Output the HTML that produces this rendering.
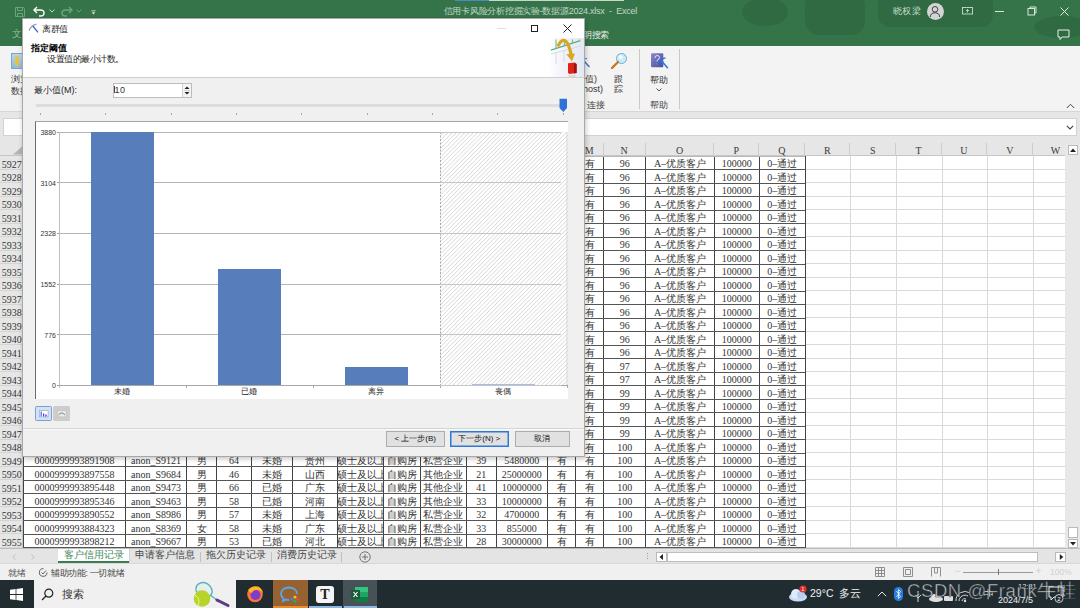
<!DOCTYPE html>
<html><head><meta charset="utf-8">
<style>
*{margin:0;padding:0;box-sizing:border-box}
html,body{width:1080px;height:608px;overflow:hidden;background:#f3f3f3;font-family:"Liberation Sans",sans-serif}
.a{position:absolute}
#title{position:absolute;left:0;top:0;width:1080px;height:45.6px;background:#357449;overflow:hidden}
#ribbon{position:absolute;left:0;top:45.6px;width:1080px;height:65.4px;background:#f3f3f3}
#fbar{position:absolute;left:0;top:111px;width:1080px;height:32.3px;background:#e6e6e6;border-top:1px solid #d6d6d6}
#gridbg{position:absolute;left:23.3px;top:156.3px;width:1042px;height:391.5px;background:#fff}
.colhdr{position:absolute;left:0;width:1066px;background:#e6e6e6;border-bottom:1px solid #c6c6c6}
.ch{position:absolute;font-family:"Liberation Serif",serif;font-size:10px;color:#3a3a3a;text-align:center;line-height:15px;border-right:1px solid #cdcdcd}
.rh{position:absolute;left:0;width:23.3px;background:#e6e6e6;font-family:"Liberation Serif",serif;font-size:10px;color:#333;text-align:right;padding-right:0.5px;padding-top:1.6px;line-height:13px;border-bottom:1px solid #d4d4d4;border-right:1px solid #c6c6c6}
.vl{position:absolute;width:1px;background:#dadada}
.hl{position:absolute;height:1px;background:#dadada}
.vd{position:absolute;width:1px;background:#444}
.hd{position:absolute;height:1px;background:#555}
.c{position:absolute;font-family:"Liberation Serif",serif;font-size:10px;color:#333;text-align:center;line-height:13.5px;white-space:nowrap;overflow:hidden}
#tabs{position:absolute;left:0;top:548px;width:1080px;height:16px;background:#e4e4e4;border-top:1px solid #bdbdbd;border-bottom:1px solid #d8d8d8}
#status{position:absolute;left:0;top:564px;width:1080px;height:16px;background:#f0f0f0}
#taskbar{position:absolute;left:0;top:580px;width:1080px;height:28px;background:#212c31}
#dlg{position:absolute;left:22px;top:18px;width:563px;height:439px;background:#f0f0f0;border:1px solid #a8a8a8;box-shadow:1px 2px 5px rgba(0,0,0,.22)}
.t{position:absolute;white-space:nowrap}
.hatch{background:repeating-linear-gradient(-45deg,#fff 0,#fff 2.2px,#cfcfcf 2.2px,#cfcfcf 3px);border:1px dashed #c8c8c8}
.btn{background:#e1e1e1;border:1px solid #adadad;font-size:8px;line-height:13.5px;text-align:center;color:#111;white-space:nowrap}
</style></head><body>
<div id="title">
<svg class="a" style="left:0;top:0" width="1080" height="45" viewBox="0 0 1080 45">
<g fill="#2f6a43">
<ellipse cx="765" cy="12" rx="23" ry="14"/><rect x="805" y="-8" width="60" height="43" rx="14"/><rect x="878" y="-10" width="115" height="37" rx="12"/>
<ellipse cx="1062" cy="27" rx="28" ry="11"/>
</g>
</svg>
<div class="a" style="left:455px;top:0;width:169px;height:1.4px;background:#c9d6cd"></div>
<div class="a" style="left:455px;top:0;width:34px;height:1.4px;background:#4a88c8"></div>
<!-- save -->
<svg class="a" style="left:15px;top:6.5px" width="10" height="10" viewBox="0 0 10 10"><path d="M.5 .5 H8.3 L9.5 1.7 V9.5 H.5 Z M2.5 .5 V3.5 H7.5 V.5 M2.5 9.5 V6.5 H7.5 V9.5" stroke="#6fa07e" stroke-width="1" fill="none"/></svg>
<!-- undo -->
<svg class="a" style="left:33px;top:6px" width="13" height="11" viewBox="0 0 13 11"><path d="M4 1 L1 4 L4 7" stroke="#fff" stroke-width="1.4" fill="none"/><path d="M1.5 4 H7.5 Q11 4 11 7 Q11 10 7.5 10 H6" stroke="#fff" stroke-width="1.4" fill="none"/></svg>
<svg class="a" style="left:49px;top:9px" width="6" height="4" viewBox="0 0 6 4"><path d="M.5 .5 L3 3 L5.5 .5" stroke="#cfe0d4" stroke-width=".9" fill="none"/></svg>
<svg class="a" style="left:60px;top:6px" width="13" height="11" viewBox="0 0 13 11"><path d="M9 1 L12 4 L9 7" stroke="#6fa680" stroke-width="1.4" fill="none"/><path d="M11.5 4 H5.5 Q2 4 2 7 Q2 10 5.5 10 H7" stroke="#6fa680" stroke-width="1.4" fill="none"/></svg>
<svg class="a" style="left:76px;top:9px" width="6" height="4" viewBox="0 0 6 4"><path d="M.5 .5 L3 3 L5.5 .5" stroke="#6fa680" stroke-width=".9" fill="none"/></svg>
<svg class="a" style="left:91px;top:9.5px" width="5" height="5" viewBox="0 0 5 5"><path d="M.5 .8 H4.5" stroke="#dfe9e2" stroke-width=".8"/><path d="M.8 2.2 H4.2 L2.5 4.5 Z" fill="#dfe9e2"/></svg>
<div class="t" style="left:443.5px;top:5px;font-size:9px;line-height:13px;color:#c2d6c8;letter-spacing:-0.25px">信用卡风险分析挖掘实验-数据源2024.xlsx&nbsp; - &nbsp;Excel</div>
<div class="t" style="left:12px;top:28px;font-size:9.5px;line-height:12px;color:#8fbc9c">文</div>
<div class="t" style="left:583px;top:29px;font-size:9px;line-height:12px;color:#e6efe8;letter-spacing:-0.5px">明搜索</div>
<div class="t" style="left:893px;top:5px;font-size:9px;line-height:13px;color:#c5dccb;letter-spacing:-0.4px">晓权 梁</div>
<div class="a" style="left:926.5px;top:3px;width:17px;height:17px;border-radius:50%;background:#d4d4d4"></div>
<svg class="a" style="left:929px;top:5px" width="12" height="13" viewBox="0 0 12 13"><circle cx="6" cy="4.3" r="2.8" stroke="#444" stroke-width="1" fill="none"/><path d="M1.3 12 Q1.5 7.8 6 7.8 Q10.5 7.8 10.7 12" stroke="#444" stroke-width="1" fill="none"/></svg>
<svg class="a" style="left:962px;top:7px" width="11" height="8" viewBox="0 0 11 8"><rect x=".5" y=".5" width="10" height="6.5" stroke="#c8dccd" stroke-width=".9" fill="none"/><path d="M5.5 5.5 V2.5 M4 4 L5.5 2.5 L7 4" stroke="#c8dccd" stroke-width=".9" fill="none"/></svg>
<div class="a" style="left:995px;top:10.5px;width:9px;height:1px;background:#d8e6dc"></div>
<svg class="a" style="left:1027px;top:6px" width="10" height="10" viewBox="0 0 10 10"><rect x="1" y="2.5" width="6.5" height="6.5" stroke="#d8e6dc" stroke-width="1" fill="none"/><path d="M3 2.5 V1 H9 V7 H7.5" stroke="#d8e6dc" stroke-width="1" fill="none"/></svg>
<svg class="a" style="left:1059.5px;top:7px" width="9" height="9" viewBox="0 0 9 9"><path d="M.5 .5 L8.5 8.5 M8.5 .5 L.5 8.5" stroke="#dfe9e2" stroke-width="1"/></svg>
<svg class="a" style="left:1057px;top:29px" width="13" height="12" viewBox="0 0 13 12"><path d="M1 1 H12 V8 H5 L3 10.5 V8 H1 Z" stroke="#e8f0ea" stroke-width="1" fill="none"/></svg>
</div>
<div id="ribbon">
<div class="a" style="left:11px;top:7px;width:13px;height:16px;background:linear-gradient(#bcd6ea,#8fb8dc);border:1px solid #7aa6cc"></div>
<div class="a" style="left:15px;top:10px;width:4px;height:10px;background:#e2c53a;border-radius:2px"></div>
<div class="t" style="left:11px;top:27px;font-size:9px;line-height:12px;color:#333">浏览<br>数据</div>
<svg class="a" style="left:583px;top:12px" width="8" height="10" viewBox="0 0 8 10"><path d="M1 3 L6.5 9" stroke="#3a78d8" stroke-width="1.5" fill="none"/><path d="M1 1 L4 .5" stroke="#3a78d8" stroke-width="1" fill="none"/></svg>
<div class="t" style="left:560px;width:37px;text-align:right;top:28.8px;font-size:9px;line-height:10px;color:#333">(值)</div><div class="t" style="left:560px;width:43px;text-align:right;top:38.8px;font-size:9px;line-height:10px;color:#333">host)</div>
<svg class="a" style="left:610px;top:6px" width="18" height="18" viewBox="0 0 18 18"><circle cx="11.5" cy="6.5" r="5" fill="#c9ecf8" stroke="#6aaed0" stroke-width="1"/><circle cx="10.5" cy="5" r="2" fill="#fff" opacity=".8"/><path d="M8 10 L2 16" stroke="#c8741e" stroke-width="2.4" stroke-linecap="round"/></svg>
<div class="t" style="left:614px;top:28.8px;font-size:9px;line-height:10px;color:#333">跟<br>踪</div>
<div class="t" style="left:587px;top:53px;font-size:9px;line-height:12px;color:#444">连接</div>
<div class="a" style="left:639px;top:3px;width:1px;height:60px;background:#c9c9c9"></div>
<svg class="a" style="left:651px;top:7.5px" width="19" height="17" viewBox="0 0 19 17"><defs><linearGradient id="hb" x1="0" y1="0" x2="1" y2="1"><stop offset="0" stop-color="#8a8ad0"/><stop offset="1" stop-color="#4a4a96"/></linearGradient></defs><rect x="0" y="0.3" width="12.3" height="14" rx="1" fill="url(#hb)"/><path d="M4 5 Q4 2.5 6.3 2.5 Q8.5 2.5 8.5 4.6 Q8.5 6.3 6.3 7 V8.5" stroke="#e8e8f8" stroke-width="1" fill="none"/><circle cx="6.3" cy="10.5" r=".7" fill="#e8e8f8"/><path d="M6 11.2 Q9 6 14.5 4.9" stroke="#2c6fd0" stroke-width="1.4" fill="none"/><path d="M9.7 6.7 L16.8 15.2" stroke="#2f7ae0" stroke-width="1.6"/></svg>
<div class="t" style="left:650px;top:28px;font-size:9px;line-height:12px;color:#333">帮助</div>
<svg class="a" style="left:656px;top:42px" width="6" height="4" viewBox="0 0 6 4"><path d="M.5 .5 L3 3 L5.5 .5" stroke="#444" stroke-width=".9" fill="none"/></svg>
<div class="t" style="left:650px;top:53px;font-size:9px;line-height:12px;color:#444">帮助</div>
<div class="a" style="left:679px;top:3px;width:1px;height:60px;background:#c9c9c9"></div>
<svg class="a" style="left:1066px;top:57px" width="9" height="6" viewBox="0 0 9 6"><path d="M.8 5 L4.5 1.3 L8.2 5" stroke="#444" stroke-width="1" fill="none"/></svg>
</div>
<div id="fbar">
<div class="a" style="left:3px;top:5.8px;width:1073.5px;height:18px;background:#fff;border:1px solid #d2d2d2"></div>
<svg class="a" style="left:1066px;top:13px" width="8" height="5" viewBox="0 0 8 5"><path d="M.8 .8 L4 4 L7.2 .8" stroke="#444" stroke-width="1.1" fill="none"/></svg>
</div>

<div id="gridbg"></div>
<div class="colhdr" style="top:143.3px;height:13px"></div>
<div class="ch" style="left:23.3px;width:102.3px;top:143.3px;height:13px">A</div>
<div class="ch" style="left:125.6px;width:60.9px;top:143.3px;height:13px">B</div>
<div class="ch" style="left:186.5px;width:30.1px;top:143.3px;height:13px">C</div>
<div class="ch" style="left:216.6px;width:34.9px;top:143.3px;height:13px">D</div>
<div class="ch" style="left:251.5px;width:41.1px;top:143.3px;height:13px">E</div>
<div class="ch" style="left:292.6px;width:44.5px;top:143.3px;height:13px">F</div>
<div class="ch" style="left:337.1px;width:46.2px;top:143.3px;height:13px">G</div>
<div class="ch" style="left:383.3px;width:37.3px;top:143.3px;height:13px">H</div>
<div class="ch" style="left:420.6px;width:45.8px;top:143.3px;height:13px">I</div>
<div class="ch" style="left:466.4px;width:29.8px;top:143.3px;height:13px">J</div>
<div class="ch" style="left:496.2px;width:51.3px;top:143.3px;height:13px">K</div>
<div class="ch" style="left:547.5px;width:28.1px;top:143.3px;height:13px">L</div>
<div class="ch" style="left:575.6px;width:28.1px;top:143.3px;height:13px">M</div>
<div class="ch" style="left:603.7px;width:42.1px;top:143.3px;height:13px">N</div>
<div class="ch" style="left:645.8px;width:68.4px;top:143.3px;height:13px">O</div>
<div class="ch" style="left:714.2px;width:45.1px;top:143.3px;height:13px">P</div>
<div class="ch" style="left:759.3px;width:46px;top:143.3px;height:13px">Q</div>
<div class="ch" style="left:805.3px;width:45px;top:143.3px;height:13px">R</div>
<div class="ch" style="left:850.3px;width:46px;top:143.3px;height:13px">S</div>
<div class="ch" style="left:896.3px;width:45.4px;top:143.3px;height:13px">T</div>
<div class="ch" style="left:941.7px;width:45.6px;top:143.3px;height:13px">U</div>
<div class="ch" style="left:987.3px;width:46px;top:143.3px;height:13px">V</div>
<div class="ch" style="left:1033.3px;width:45.5px;top:143.3px;height:13px">W</div>
<div class="rh" style="top:156.3px;height:13.5px">5927</div>
<div class="rh" style="top:169.8px;height:13.5px">5928</div>
<div class="rh" style="top:183.3px;height:13.5px">5929</div>
<div class="rh" style="top:196.8px;height:13.5px">5930</div>
<div class="rh" style="top:210.3px;height:13.5px">5931</div>
<div class="rh" style="top:223.8px;height:13.5px">5932</div>
<div class="rh" style="top:237.3px;height:13.5px">5933</div>
<div class="rh" style="top:250.8px;height:13.5px">5934</div>
<div class="rh" style="top:264.3px;height:13.5px">5935</div>
<div class="rh" style="top:277.8px;height:13.5px">5936</div>
<div class="rh" style="top:291.3px;height:13.5px">5937</div>
<div class="rh" style="top:304.8px;height:13.5px">5938</div>
<div class="rh" style="top:318.3px;height:13.5px">5939</div>
<div class="rh" style="top:331.8px;height:13.5px">5940</div>
<div class="rh" style="top:345.3px;height:13.5px">5941</div>
<div class="rh" style="top:358.8px;height:13.5px">5942</div>
<div class="rh" style="top:372.3px;height:13.5px">5943</div>
<div class="rh" style="top:385.8px;height:13.5px">5944</div>
<div class="rh" style="top:399.3px;height:13.5px">5945</div>
<div class="rh" style="top:412.8px;height:13.5px">5946</div>
<div class="rh" style="top:426.3px;height:13.5px">5947</div>
<div class="rh" style="top:439.8px;height:13.5px">5948</div>
<div class="rh" style="top:453.3px;height:13.5px">5949</div>
<div class="rh" style="top:466.8px;height:13.5px">5950</div>
<div class="rh" style="top:480.3px;height:13.5px">5951</div>
<div class="rh" style="top:493.8px;height:13.5px">5952</div>
<div class="rh" style="top:507.3px;height:13.5px">5953</div>
<div class="rh" style="top:520.8px;height:13.5px">5954</div>
<div class="rh" style="top:534.3px;height:13.5px">5955</div>
<div class="vl" style="left:805.3px;top:156.3px;height:391.5px"></div>
<div class="vl" style="left:850.3px;top:156.3px;height:391.5px"></div>
<div class="vl" style="left:896.3px;top:156.3px;height:391.5px"></div>
<div class="vl" style="left:941.7px;top:156.3px;height:391.5px"></div>
<div class="vl" style="left:987.3px;top:156.3px;height:391.5px"></div>
<div class="vl" style="left:1033.3px;top:156.3px;height:391.5px"></div>
<div class="hl" style="left:805.3px;width:260px;top:168.8px"></div>
<div class="hl" style="left:805.3px;width:260px;top:182.3px"></div>
<div class="hl" style="left:805.3px;width:260px;top:195.8px"></div>
<div class="hl" style="left:805.3px;width:260px;top:209.3px"></div>
<div class="hl" style="left:805.3px;width:260px;top:222.8px"></div>
<div class="hl" style="left:805.3px;width:260px;top:236.3px"></div>
<div class="hl" style="left:805.3px;width:260px;top:249.8px"></div>
<div class="hl" style="left:805.3px;width:260px;top:263.3px"></div>
<div class="hl" style="left:805.3px;width:260px;top:276.8px"></div>
<div class="hl" style="left:805.3px;width:260px;top:290.3px"></div>
<div class="hl" style="left:805.3px;width:260px;top:303.8px"></div>
<div class="hl" style="left:805.3px;width:260px;top:317.3px"></div>
<div class="hl" style="left:805.3px;width:260px;top:330.8px"></div>
<div class="hl" style="left:805.3px;width:260px;top:344.3px"></div>
<div class="hl" style="left:805.3px;width:260px;top:357.8px"></div>
<div class="hl" style="left:805.3px;width:260px;top:371.3px"></div>
<div class="hl" style="left:805.3px;width:260px;top:384.8px"></div>
<div class="hl" style="left:805.3px;width:260px;top:398.3px"></div>
<div class="hl" style="left:805.3px;width:260px;top:411.8px"></div>
<div class="hl" style="left:805.3px;width:260px;top:425.3px"></div>
<div class="hl" style="left:805.3px;width:260px;top:438.8px"></div>
<div class="hl" style="left:805.3px;width:260px;top:452.3px"></div>
<div class="hl" style="left:805.3px;width:260px;top:465.8px"></div>
<div class="hl" style="left:805.3px;width:260px;top:479.3px"></div>
<div class="hl" style="left:805.3px;width:260px;top:492.8px"></div>
<div class="hl" style="left:805.3px;width:260px;top:506.3px"></div>
<div class="hl" style="left:805.3px;width:260px;top:519.8px"></div>
<div class="hl" style="left:805.3px;width:260px;top:533.3px"></div>
<div class="hl" style="left:805.3px;width:260px;top:546.8px"></div>
<div class="vd" style="left:22.8px;top:156.3px;height:391.5px"></div>
<div class="vd" style="left:125.1px;top:156.3px;height:391.5px"></div>
<div class="vd" style="left:186px;top:156.3px;height:391.5px"></div>
<div class="vd" style="left:216.1px;top:156.3px;height:391.5px"></div>
<div class="vd" style="left:251px;top:156.3px;height:391.5px"></div>
<div class="vd" style="left:292.1px;top:156.3px;height:391.5px"></div>
<div class="vd" style="left:336.6px;top:156.3px;height:391.5px"></div>
<div class="vd" style="left:382.8px;top:156.3px;height:391.5px"></div>
<div class="vd" style="left:420.1px;top:156.3px;height:391.5px"></div>
<div class="vd" style="left:465.9px;top:156.3px;height:391.5px"></div>
<div class="vd" style="left:495.7px;top:156.3px;height:391.5px"></div>
<div class="vd" style="left:547px;top:156.3px;height:391.5px"></div>
<div class="vd" style="left:575.1px;top:156.3px;height:391.5px"></div>
<div class="vd" style="left:603.2px;top:156.3px;height:391.5px"></div>
<div class="vd" style="left:645.3px;top:156.3px;height:391.5px"></div>
<div class="vd" style="left:713.7px;top:156.3px;height:391.5px"></div>
<div class="vd" style="left:758.8px;top:156.3px;height:391.5px"></div>
<div class="vd" style="left:804.8px;top:156.3px;height:391.5px"></div>
<div class="hd" style="left:23.3px;width:782px;top:155.8px;background:#b8b8b8"></div>
<div class="hd" style="left:23.3px;width:782px;top:169.3px"></div>
<div class="hd" style="left:23.3px;width:782px;top:182.8px"></div>
<div class="hd" style="left:23.3px;width:782px;top:196.3px"></div>
<div class="hd" style="left:23.3px;width:782px;top:209.8px"></div>
<div class="hd" style="left:23.3px;width:782px;top:223.3px"></div>
<div class="hd" style="left:23.3px;width:782px;top:236.8px"></div>
<div class="hd" style="left:23.3px;width:782px;top:250.3px"></div>
<div class="hd" style="left:23.3px;width:782px;top:263.8px"></div>
<div class="hd" style="left:23.3px;width:782px;top:277.3px"></div>
<div class="hd" style="left:23.3px;width:782px;top:290.8px"></div>
<div class="hd" style="left:23.3px;width:782px;top:304.3px"></div>
<div class="hd" style="left:23.3px;width:782px;top:317.8px"></div>
<div class="hd" style="left:23.3px;width:782px;top:331.3px"></div>
<div class="hd" style="left:23.3px;width:782px;top:344.8px"></div>
<div class="hd" style="left:23.3px;width:782px;top:358.3px"></div>
<div class="hd" style="left:23.3px;width:782px;top:371.8px"></div>
<div class="hd" style="left:23.3px;width:782px;top:385.3px"></div>
<div class="hd" style="left:23.3px;width:782px;top:398.8px"></div>
<div class="hd" style="left:23.3px;width:782px;top:412.3px"></div>
<div class="hd" style="left:23.3px;width:782px;top:425.8px"></div>
<div class="hd" style="left:23.3px;width:782px;top:439.3px"></div>
<div class="hd" style="left:23.3px;width:782px;top:452.8px"></div>
<div class="hd" style="left:23.3px;width:782px;top:466.3px"></div>
<div class="hd" style="left:23.3px;width:782px;top:479.8px"></div>
<div class="hd" style="left:23.3px;width:782px;top:493.3px"></div>
<div class="hd" style="left:23.3px;width:782px;top:506.8px"></div>
<div class="hd" style="left:23.3px;width:782px;top:520.3px"></div>
<div class="hd" style="left:23.3px;width:782px;top:533.8px"></div>
<div class="hd" style="left:23.3px;width:782px;top:547.3px"></div>
<div class="c" style="left:547.5px;width:28.1px;top:157.1px;height:12.7px">有</div>
<div class="c" style="left:575.6px;width:28.1px;top:157.1px;height:12.7px">有</div>
<div class="c" style="left:603.7px;width:42.1px;top:157.1px;height:12.7px">96</div>
<div class="c" style="left:645.8px;width:68.4px;top:157.1px;height:12.7px">A–优质客户</div>
<div class="c" style="left:714.2px;width:45.1px;top:157.1px;height:12.7px">100000</div>
<div class="c" style="left:759.3px;width:46px;top:157.1px;height:12.7px">0–通过</div>
<div class="c" style="left:547.5px;width:28.1px;top:170.6px;height:12.7px">有</div>
<div class="c" style="left:575.6px;width:28.1px;top:170.6px;height:12.7px">有</div>
<div class="c" style="left:603.7px;width:42.1px;top:170.6px;height:12.7px">96</div>
<div class="c" style="left:645.8px;width:68.4px;top:170.6px;height:12.7px">A–优质客户</div>
<div class="c" style="left:714.2px;width:45.1px;top:170.6px;height:12.7px">100000</div>
<div class="c" style="left:759.3px;width:46px;top:170.6px;height:12.7px">0–通过</div>
<div class="c" style="left:547.5px;width:28.1px;top:184.1px;height:12.7px">有</div>
<div class="c" style="left:575.6px;width:28.1px;top:184.1px;height:12.7px">有</div>
<div class="c" style="left:603.7px;width:42.1px;top:184.1px;height:12.7px">96</div>
<div class="c" style="left:645.8px;width:68.4px;top:184.1px;height:12.7px">A–优质客户</div>
<div class="c" style="left:714.2px;width:45.1px;top:184.1px;height:12.7px">100000</div>
<div class="c" style="left:759.3px;width:46px;top:184.1px;height:12.7px">0–通过</div>
<div class="c" style="left:547.5px;width:28.1px;top:197.6px;height:12.7px">有</div>
<div class="c" style="left:575.6px;width:28.1px;top:197.6px;height:12.7px">有</div>
<div class="c" style="left:603.7px;width:42.1px;top:197.6px;height:12.7px">96</div>
<div class="c" style="left:645.8px;width:68.4px;top:197.6px;height:12.7px">A–优质客户</div>
<div class="c" style="left:714.2px;width:45.1px;top:197.6px;height:12.7px">100000</div>
<div class="c" style="left:759.3px;width:46px;top:197.6px;height:12.7px">0–通过</div>
<div class="c" style="left:547.5px;width:28.1px;top:211.1px;height:12.7px">有</div>
<div class="c" style="left:575.6px;width:28.1px;top:211.1px;height:12.7px">有</div>
<div class="c" style="left:603.7px;width:42.1px;top:211.1px;height:12.7px">96</div>
<div class="c" style="left:645.8px;width:68.4px;top:211.1px;height:12.7px">A–优质客户</div>
<div class="c" style="left:714.2px;width:45.1px;top:211.1px;height:12.7px">100000</div>
<div class="c" style="left:759.3px;width:46px;top:211.1px;height:12.7px">0–通过</div>
<div class="c" style="left:547.5px;width:28.1px;top:224.6px;height:12.7px">有</div>
<div class="c" style="left:575.6px;width:28.1px;top:224.6px;height:12.7px">有</div>
<div class="c" style="left:603.7px;width:42.1px;top:224.6px;height:12.7px">96</div>
<div class="c" style="left:645.8px;width:68.4px;top:224.6px;height:12.7px">A–优质客户</div>
<div class="c" style="left:714.2px;width:45.1px;top:224.6px;height:12.7px">100000</div>
<div class="c" style="left:759.3px;width:46px;top:224.6px;height:12.7px">0–通过</div>
<div class="c" style="left:547.5px;width:28.1px;top:238.1px;height:12.7px">有</div>
<div class="c" style="left:575.6px;width:28.1px;top:238.1px;height:12.7px">有</div>
<div class="c" style="left:603.7px;width:42.1px;top:238.1px;height:12.7px">96</div>
<div class="c" style="left:645.8px;width:68.4px;top:238.1px;height:12.7px">A–优质客户</div>
<div class="c" style="left:714.2px;width:45.1px;top:238.1px;height:12.7px">100000</div>
<div class="c" style="left:759.3px;width:46px;top:238.1px;height:12.7px">0–通过</div>
<div class="c" style="left:547.5px;width:28.1px;top:251.6px;height:12.7px">有</div>
<div class="c" style="left:575.6px;width:28.1px;top:251.6px;height:12.7px">有</div>
<div class="c" style="left:603.7px;width:42.1px;top:251.6px;height:12.7px">96</div>
<div class="c" style="left:645.8px;width:68.4px;top:251.6px;height:12.7px">A–优质客户</div>
<div class="c" style="left:714.2px;width:45.1px;top:251.6px;height:12.7px">100000</div>
<div class="c" style="left:759.3px;width:46px;top:251.6px;height:12.7px">0–通过</div>
<div class="c" style="left:547.5px;width:28.1px;top:265.1px;height:12.7px">有</div>
<div class="c" style="left:575.6px;width:28.1px;top:265.1px;height:12.7px">有</div>
<div class="c" style="left:603.7px;width:42.1px;top:265.1px;height:12.7px">96</div>
<div class="c" style="left:645.8px;width:68.4px;top:265.1px;height:12.7px">A–优质客户</div>
<div class="c" style="left:714.2px;width:45.1px;top:265.1px;height:12.7px">100000</div>
<div class="c" style="left:759.3px;width:46px;top:265.1px;height:12.7px">0–通过</div>
<div class="c" style="left:547.5px;width:28.1px;top:278.6px;height:12.7px">有</div>
<div class="c" style="left:575.6px;width:28.1px;top:278.6px;height:12.7px">有</div>
<div class="c" style="left:603.7px;width:42.1px;top:278.6px;height:12.7px">96</div>
<div class="c" style="left:645.8px;width:68.4px;top:278.6px;height:12.7px">A–优质客户</div>
<div class="c" style="left:714.2px;width:45.1px;top:278.6px;height:12.7px">100000</div>
<div class="c" style="left:759.3px;width:46px;top:278.6px;height:12.7px">0–通过</div>
<div class="c" style="left:547.5px;width:28.1px;top:292.1px;height:12.7px">有</div>
<div class="c" style="left:575.6px;width:28.1px;top:292.1px;height:12.7px">有</div>
<div class="c" style="left:603.7px;width:42.1px;top:292.1px;height:12.7px">96</div>
<div class="c" style="left:645.8px;width:68.4px;top:292.1px;height:12.7px">A–优质客户</div>
<div class="c" style="left:714.2px;width:45.1px;top:292.1px;height:12.7px">100000</div>
<div class="c" style="left:759.3px;width:46px;top:292.1px;height:12.7px">0–通过</div>
<div class="c" style="left:547.5px;width:28.1px;top:305.6px;height:12.7px">有</div>
<div class="c" style="left:575.6px;width:28.1px;top:305.6px;height:12.7px">有</div>
<div class="c" style="left:603.7px;width:42.1px;top:305.6px;height:12.7px">96</div>
<div class="c" style="left:645.8px;width:68.4px;top:305.6px;height:12.7px">A–优质客户</div>
<div class="c" style="left:714.2px;width:45.1px;top:305.6px;height:12.7px">100000</div>
<div class="c" style="left:759.3px;width:46px;top:305.6px;height:12.7px">0–通过</div>
<div class="c" style="left:547.5px;width:28.1px;top:319.1px;height:12.7px">有</div>
<div class="c" style="left:575.6px;width:28.1px;top:319.1px;height:12.7px">有</div>
<div class="c" style="left:603.7px;width:42.1px;top:319.1px;height:12.7px">96</div>
<div class="c" style="left:645.8px;width:68.4px;top:319.1px;height:12.7px">A–优质客户</div>
<div class="c" style="left:714.2px;width:45.1px;top:319.1px;height:12.7px">100000</div>
<div class="c" style="left:759.3px;width:46px;top:319.1px;height:12.7px">0–通过</div>
<div class="c" style="left:547.5px;width:28.1px;top:332.6px;height:12.7px">有</div>
<div class="c" style="left:575.6px;width:28.1px;top:332.6px;height:12.7px">有</div>
<div class="c" style="left:603.7px;width:42.1px;top:332.6px;height:12.7px">96</div>
<div class="c" style="left:645.8px;width:68.4px;top:332.6px;height:12.7px">A–优质客户</div>
<div class="c" style="left:714.2px;width:45.1px;top:332.6px;height:12.7px">100000</div>
<div class="c" style="left:759.3px;width:46px;top:332.6px;height:12.7px">0–通过</div>
<div class="c" style="left:547.5px;width:28.1px;top:346.1px;height:12.7px">有</div>
<div class="c" style="left:575.6px;width:28.1px;top:346.1px;height:12.7px">有</div>
<div class="c" style="left:603.7px;width:42.1px;top:346.1px;height:12.7px">96</div>
<div class="c" style="left:645.8px;width:68.4px;top:346.1px;height:12.7px">A–优质客户</div>
<div class="c" style="left:714.2px;width:45.1px;top:346.1px;height:12.7px">100000</div>
<div class="c" style="left:759.3px;width:46px;top:346.1px;height:12.7px">0–通过</div>
<div class="c" style="left:547.5px;width:28.1px;top:359.6px;height:12.7px">有</div>
<div class="c" style="left:575.6px;width:28.1px;top:359.6px;height:12.7px">有</div>
<div class="c" style="left:603.7px;width:42.1px;top:359.6px;height:12.7px">97</div>
<div class="c" style="left:645.8px;width:68.4px;top:359.6px;height:12.7px">A–优质客户</div>
<div class="c" style="left:714.2px;width:45.1px;top:359.6px;height:12.7px">100000</div>
<div class="c" style="left:759.3px;width:46px;top:359.6px;height:12.7px">0–通过</div>
<div class="c" style="left:547.5px;width:28.1px;top:373.1px;height:12.7px">有</div>
<div class="c" style="left:575.6px;width:28.1px;top:373.1px;height:12.7px">有</div>
<div class="c" style="left:603.7px;width:42.1px;top:373.1px;height:12.7px">97</div>
<div class="c" style="left:645.8px;width:68.4px;top:373.1px;height:12.7px">A–优质客户</div>
<div class="c" style="left:714.2px;width:45.1px;top:373.1px;height:12.7px">100000</div>
<div class="c" style="left:759.3px;width:46px;top:373.1px;height:12.7px">0–通过</div>
<div class="c" style="left:547.5px;width:28.1px;top:386.6px;height:12.7px">有</div>
<div class="c" style="left:575.6px;width:28.1px;top:386.6px;height:12.7px">有</div>
<div class="c" style="left:603.7px;width:42.1px;top:386.6px;height:12.7px">99</div>
<div class="c" style="left:645.8px;width:68.4px;top:386.6px;height:12.7px">A–优质客户</div>
<div class="c" style="left:714.2px;width:45.1px;top:386.6px;height:12.7px">100000</div>
<div class="c" style="left:759.3px;width:46px;top:386.6px;height:12.7px">0–通过</div>
<div class="c" style="left:547.5px;width:28.1px;top:400.1px;height:12.7px">有</div>
<div class="c" style="left:575.6px;width:28.1px;top:400.1px;height:12.7px">有</div>
<div class="c" style="left:603.7px;width:42.1px;top:400.1px;height:12.7px">99</div>
<div class="c" style="left:645.8px;width:68.4px;top:400.1px;height:12.7px">A–优质客户</div>
<div class="c" style="left:714.2px;width:45.1px;top:400.1px;height:12.7px">100000</div>
<div class="c" style="left:759.3px;width:46px;top:400.1px;height:12.7px">0–通过</div>
<div class="c" style="left:547.5px;width:28.1px;top:413.6px;height:12.7px">有</div>
<div class="c" style="left:575.6px;width:28.1px;top:413.6px;height:12.7px">有</div>
<div class="c" style="left:603.7px;width:42.1px;top:413.6px;height:12.7px">99</div>
<div class="c" style="left:645.8px;width:68.4px;top:413.6px;height:12.7px">A–优质客户</div>
<div class="c" style="left:714.2px;width:45.1px;top:413.6px;height:12.7px">100000</div>
<div class="c" style="left:759.3px;width:46px;top:413.6px;height:12.7px">0–通过</div>
<div class="c" style="left:547.5px;width:28.1px;top:427.1px;height:12.7px">有</div>
<div class="c" style="left:575.6px;width:28.1px;top:427.1px;height:12.7px">有</div>
<div class="c" style="left:603.7px;width:42.1px;top:427.1px;height:12.7px">99</div>
<div class="c" style="left:645.8px;width:68.4px;top:427.1px;height:12.7px">A–优质客户</div>
<div class="c" style="left:714.2px;width:45.1px;top:427.1px;height:12.7px">100000</div>
<div class="c" style="left:759.3px;width:46px;top:427.1px;height:12.7px">0–通过</div>
<div class="c" style="left:547.5px;width:28.1px;top:440.6px;height:12.7px">有</div>
<div class="c" style="left:575.6px;width:28.1px;top:440.6px;height:12.7px">有</div>
<div class="c" style="left:603.7px;width:42.1px;top:440.6px;height:12.7px">100</div>
<div class="c" style="left:645.8px;width:68.4px;top:440.6px;height:12.7px">A–优质客户</div>
<div class="c" style="left:714.2px;width:45.1px;top:440.6px;height:12.7px">100000</div>
<div class="c" style="left:759.3px;width:46px;top:440.6px;height:12.7px">0–通过</div>
<div class="c" style="left:23.3px;width:102.3px;top:454.1px;height:12.7px">0000999993891908</div>
<div class="c" style="left:125.6px;width:60.9px;top:454.1px;height:12.7px">anon_S9121</div>
<div class="c" style="left:186.5px;width:30.1px;top:454.1px;height:12.7px">男</div>
<div class="c" style="left:216.6px;width:34.9px;top:454.1px;height:12.7px">64</div>
<div class="c" style="left:251.5px;width:41.1px;top:454.1px;height:12.7px">未婚</div>
<div class="c" style="left:292.6px;width:44.5px;top:454.1px;height:12.7px">贵州</div>
<div class="c" style="left:337.1px;width:46.2px;top:454.1px;height:12.7px">硕士及以上</div>
<div class="c" style="left:383.3px;width:37.3px;top:454.1px;height:12.7px">自购房</div>
<div class="c" style="left:420.6px;width:45.8px;top:454.1px;height:12.7px">私营企业</div>
<div class="c" style="left:466.4px;width:29.8px;top:454.1px;height:12.7px">39</div>
<div class="c" style="left:496.2px;width:51.3px;top:454.1px;height:12.7px">5480000</div>
<div class="c" style="left:547.5px;width:28.1px;top:454.1px;height:12.7px">有</div>
<div class="c" style="left:575.6px;width:28.1px;top:454.1px;height:12.7px">有</div>
<div class="c" style="left:603.7px;width:42.1px;top:454.1px;height:12.7px">100</div>
<div class="c" style="left:645.8px;width:68.4px;top:454.1px;height:12.7px">A–优质客户</div>
<div class="c" style="left:714.2px;width:45.1px;top:454.1px;height:12.7px">100000</div>
<div class="c" style="left:759.3px;width:46px;top:454.1px;height:12.7px">0–通过</div>
<div class="c" style="left:23.3px;width:102.3px;top:467.6px;height:12.7px">0000999993897558</div>
<div class="c" style="left:125.6px;width:60.9px;top:467.6px;height:12.7px">anon_S9684</div>
<div class="c" style="left:186.5px;width:30.1px;top:467.6px;height:12.7px">男</div>
<div class="c" style="left:216.6px;width:34.9px;top:467.6px;height:12.7px">46</div>
<div class="c" style="left:251.5px;width:41.1px;top:467.6px;height:12.7px">未婚</div>
<div class="c" style="left:292.6px;width:44.5px;top:467.6px;height:12.7px">山西</div>
<div class="c" style="left:337.1px;width:46.2px;top:467.6px;height:12.7px">硕士及以上</div>
<div class="c" style="left:383.3px;width:37.3px;top:467.6px;height:12.7px">自购房</div>
<div class="c" style="left:420.6px;width:45.8px;top:467.6px;height:12.7px">其他企业</div>
<div class="c" style="left:466.4px;width:29.8px;top:467.6px;height:12.7px">21</div>
<div class="c" style="left:496.2px;width:51.3px;top:467.6px;height:12.7px">25000000</div>
<div class="c" style="left:547.5px;width:28.1px;top:467.6px;height:12.7px">有</div>
<div class="c" style="left:575.6px;width:28.1px;top:467.6px;height:12.7px">有</div>
<div class="c" style="left:603.7px;width:42.1px;top:467.6px;height:12.7px">100</div>
<div class="c" style="left:645.8px;width:68.4px;top:467.6px;height:12.7px">A–优质客户</div>
<div class="c" style="left:714.2px;width:45.1px;top:467.6px;height:12.7px">100000</div>
<div class="c" style="left:759.3px;width:46px;top:467.6px;height:12.7px">0–通过</div>
<div class="c" style="left:23.3px;width:102.3px;top:481.1px;height:12.7px">0000999993895448</div>
<div class="c" style="left:125.6px;width:60.9px;top:481.1px;height:12.7px">anon_S9473</div>
<div class="c" style="left:186.5px;width:30.1px;top:481.1px;height:12.7px">男</div>
<div class="c" style="left:216.6px;width:34.9px;top:481.1px;height:12.7px">66</div>
<div class="c" style="left:251.5px;width:41.1px;top:481.1px;height:12.7px">已婚</div>
<div class="c" style="left:292.6px;width:44.5px;top:481.1px;height:12.7px">广东</div>
<div class="c" style="left:337.1px;width:46.2px;top:481.1px;height:12.7px">硕士及以上</div>
<div class="c" style="left:383.3px;width:37.3px;top:481.1px;height:12.7px">自购房</div>
<div class="c" style="left:420.6px;width:45.8px;top:481.1px;height:12.7px">其他企业</div>
<div class="c" style="left:466.4px;width:29.8px;top:481.1px;height:12.7px">41</div>
<div class="c" style="left:496.2px;width:51.3px;top:481.1px;height:12.7px">10000000</div>
<div class="c" style="left:547.5px;width:28.1px;top:481.1px;height:12.7px">有</div>
<div class="c" style="left:575.6px;width:28.1px;top:481.1px;height:12.7px">有</div>
<div class="c" style="left:603.7px;width:42.1px;top:481.1px;height:12.7px">100</div>
<div class="c" style="left:645.8px;width:68.4px;top:481.1px;height:12.7px">A–优质客户</div>
<div class="c" style="left:714.2px;width:45.1px;top:481.1px;height:12.7px">100000</div>
<div class="c" style="left:759.3px;width:46px;top:481.1px;height:12.7px">0–通过</div>
<div class="c" style="left:23.3px;width:102.3px;top:494.6px;height:12.7px">0000999993895346</div>
<div class="c" style="left:125.6px;width:60.9px;top:494.6px;height:12.7px">anon_S9463</div>
<div class="c" style="left:186.5px;width:30.1px;top:494.6px;height:12.7px">男</div>
<div class="c" style="left:216.6px;width:34.9px;top:494.6px;height:12.7px">58</div>
<div class="c" style="left:251.5px;width:41.1px;top:494.6px;height:12.7px">已婚</div>
<div class="c" style="left:292.6px;width:44.5px;top:494.6px;height:12.7px">河南</div>
<div class="c" style="left:337.1px;width:46.2px;top:494.6px;height:12.7px">硕士及以上</div>
<div class="c" style="left:383.3px;width:37.3px;top:494.6px;height:12.7px">自购房</div>
<div class="c" style="left:420.6px;width:45.8px;top:494.6px;height:12.7px">其他企业</div>
<div class="c" style="left:466.4px;width:29.8px;top:494.6px;height:12.7px">33</div>
<div class="c" style="left:496.2px;width:51.3px;top:494.6px;height:12.7px">10000000</div>
<div class="c" style="left:547.5px;width:28.1px;top:494.6px;height:12.7px">有</div>
<div class="c" style="left:575.6px;width:28.1px;top:494.6px;height:12.7px">有</div>
<div class="c" style="left:603.7px;width:42.1px;top:494.6px;height:12.7px">100</div>
<div class="c" style="left:645.8px;width:68.4px;top:494.6px;height:12.7px">A–优质客户</div>
<div class="c" style="left:714.2px;width:45.1px;top:494.6px;height:12.7px">100000</div>
<div class="c" style="left:759.3px;width:46px;top:494.6px;height:12.7px">0–通过</div>
<div class="c" style="left:23.3px;width:102.3px;top:508.1px;height:12.7px">0000999993890552</div>
<div class="c" style="left:125.6px;width:60.9px;top:508.1px;height:12.7px">anon_S8986</div>
<div class="c" style="left:186.5px;width:30.1px;top:508.1px;height:12.7px">男</div>
<div class="c" style="left:216.6px;width:34.9px;top:508.1px;height:12.7px">57</div>
<div class="c" style="left:251.5px;width:41.1px;top:508.1px;height:12.7px">未婚</div>
<div class="c" style="left:292.6px;width:44.5px;top:508.1px;height:12.7px">上海</div>
<div class="c" style="left:337.1px;width:46.2px;top:508.1px;height:12.7px">硕士及以上</div>
<div class="c" style="left:383.3px;width:37.3px;top:508.1px;height:12.7px">自购房</div>
<div class="c" style="left:420.6px;width:45.8px;top:508.1px;height:12.7px">私营企业</div>
<div class="c" style="left:466.4px;width:29.8px;top:508.1px;height:12.7px">32</div>
<div class="c" style="left:496.2px;width:51.3px;top:508.1px;height:12.7px">4700000</div>
<div class="c" style="left:547.5px;width:28.1px;top:508.1px;height:12.7px">有</div>
<div class="c" style="left:575.6px;width:28.1px;top:508.1px;height:12.7px">有</div>
<div class="c" style="left:603.7px;width:42.1px;top:508.1px;height:12.7px">100</div>
<div class="c" style="left:645.8px;width:68.4px;top:508.1px;height:12.7px">A–优质客户</div>
<div class="c" style="left:714.2px;width:45.1px;top:508.1px;height:12.7px">100000</div>
<div class="c" style="left:759.3px;width:46px;top:508.1px;height:12.7px">0–通过</div>
<div class="c" style="left:23.3px;width:102.3px;top:521.6px;height:12.7px">0000999993884323</div>
<div class="c" style="left:125.6px;width:60.9px;top:521.6px;height:12.7px">anon_S8369</div>
<div class="c" style="left:186.5px;width:30.1px;top:521.6px;height:12.7px">女</div>
<div class="c" style="left:216.6px;width:34.9px;top:521.6px;height:12.7px">58</div>
<div class="c" style="left:251.5px;width:41.1px;top:521.6px;height:12.7px">未婚</div>
<div class="c" style="left:292.6px;width:44.5px;top:521.6px;height:12.7px">广东</div>
<div class="c" style="left:337.1px;width:46.2px;top:521.6px;height:12.7px">硕士及以上</div>
<div class="c" style="left:383.3px;width:37.3px;top:521.6px;height:12.7px">自购房</div>
<div class="c" style="left:420.6px;width:45.8px;top:521.6px;height:12.7px">私营企业</div>
<div class="c" style="left:466.4px;width:29.8px;top:521.6px;height:12.7px">33</div>
<div class="c" style="left:496.2px;width:51.3px;top:521.6px;height:12.7px">855000</div>
<div class="c" style="left:547.5px;width:28.1px;top:521.6px;height:12.7px">有</div>
<div class="c" style="left:575.6px;width:28.1px;top:521.6px;height:12.7px">有</div>
<div class="c" style="left:603.7px;width:42.1px;top:521.6px;height:12.7px">100</div>
<div class="c" style="left:645.8px;width:68.4px;top:521.6px;height:12.7px">A–优质客户</div>
<div class="c" style="left:714.2px;width:45.1px;top:521.6px;height:12.7px">100000</div>
<div class="c" style="left:759.3px;width:46px;top:521.6px;height:12.7px">0–通过</div>
<div class="c" style="left:23.3px;width:102.3px;top:535.1px;height:12.7px">0000999993898212</div>
<div class="c" style="left:125.6px;width:60.9px;top:535.1px;height:12.7px">anon_S9667</div>
<div class="c" style="left:186.5px;width:30.1px;top:535.1px;height:12.7px">男</div>
<div class="c" style="left:216.6px;width:34.9px;top:535.1px;height:12.7px">53</div>
<div class="c" style="left:251.5px;width:41.1px;top:535.1px;height:12.7px">已婚</div>
<div class="c" style="left:292.6px;width:44.5px;top:535.1px;height:12.7px">河北</div>
<div class="c" style="left:337.1px;width:46.2px;top:535.1px;height:12.7px">硕士及以上</div>
<div class="c" style="left:383.3px;width:37.3px;top:535.1px;height:12.7px">自购房</div>
<div class="c" style="left:420.6px;width:45.8px;top:535.1px;height:12.7px">私营企业</div>
<div class="c" style="left:466.4px;width:29.8px;top:535.1px;height:12.7px">28</div>
<div class="c" style="left:496.2px;width:51.3px;top:535.1px;height:12.7px">30000000</div>
<div class="c" style="left:547.5px;width:28.1px;top:535.1px;height:12.7px">有</div>
<div class="c" style="left:575.6px;width:28.1px;top:535.1px;height:12.7px">有</div>
<div class="c" style="left:603.7px;width:42.1px;top:535.1px;height:12.7px">100</div>
<div class="c" style="left:645.8px;width:68.4px;top:535.1px;height:12.7px">A–优质客户</div>
<div class="c" style="left:714.2px;width:45.1px;top:535.1px;height:12.7px">100000</div>
<div class="c" style="left:759.3px;width:46px;top:535.1px;height:12.7px">0–通过</div>
<svg class="a" style="left:13px;top:145.5px" width="10" height="9" viewBox="0 0 11 9"><path d="M10 0 V9 H0 Z" fill="#b4b4b4"/></svg>
<div id="tabs">
<svg class="a" style="left:12px;top:5px" width="4" height="6" viewBox="0 0 4 6"><path d="M3.5 .5 L.8 3 L3.5 5.5" stroke="#b8b8b8" stroke-width=".8" fill="none"/></svg>
<svg class="a" style="left:31px;top:5px" width="4" height="6" viewBox="0 0 4 6"><path d="M.5 .5 L3.2 3 L.5 5.5" stroke="#b8b8b8" stroke-width=".8" fill="none"/></svg>
<div class="a" style="left:58px;top:0;width:71px;height:14px;background:#fff;border-bottom:2px solid #3a7d52;box-shadow:1px 0 0 #d0d0d0"></div>
<div class="t" style="left:58px;width:71px;text-align:center;top:-1px;font-size:9.5px;line-height:13px;color:#3f875a">客户信用记录</div>
<div class="t" style="left:135px;top:-1px;font-size:9.5px;line-height:13px;color:#444">申请客户信息</div>
<div class="a" style="left:199.5px;top:3px;width:1px;height:10px;background:#c0c0c0"></div>
<div class="t" style="left:206px;top:-1px;font-size:9.5px;line-height:13px;color:#444">拖欠历史记录</div>
<div class="a" style="left:270.5px;top:3px;width:1px;height:10px;background:#c0c0c0"></div>
<div class="t" style="left:277px;top:-1px;font-size:9.5px;line-height:13px;color:#444">消费历史记录</div>
<div class="a" style="left:341px;top:3px;width:1px;height:10px;background:#c0c0c0"></div>
<svg class="a" style="left:359px;top:2px" width="12" height="12" viewBox="0 0 12 12"><circle cx="6" cy="6" r="5.2" stroke="#666" stroke-width=".9" fill="none"/><path d="M6 3 V9 M3 6 H9" stroke="#666" stroke-width=".9"/></svg>
<div class="a" style="left:647px;top:4px;width:1px;height:1px;background:#999;box-shadow:0 2.5px 0 #999,0 5px 0 #999"></div>
<div class="a" style="left:656px;top:2.5px;width:11px;height:10px;background:#fff;border:1px solid #b9b9b9"></div>
<svg class="a" style="left:659px;top:4.5px" width="5" height="6" viewBox="0 0 5 6"><path d="M4 0 V6 L.5 3 Z" fill="#222"/></svg>
<div class="a" style="left:666.5px;top:2.5px;width:371px;height:10px;background:#fff;border:1px solid #bdbdbd"></div>
<div class="a" style="left:1055px;top:2.5px;width:11px;height:10px;background:#fff;border:1px solid #b9b9b9"></div>
<svg class="a" style="left:1059px;top:4.5px" width="5" height="6" viewBox="0 0 5 6"><path d="M.8 0 V6 L4.3 3 Z" fill="#222"/></svg>
</div>
<div class="a" style="left:1065.3px;top:143px;width:14.7px;height:405px;background:#e8e8e8"></div>
<div class="a" style="left:1067.5px;top:144.5px;width:10.5px;height:10px;background:#fff;border:1px solid #b9b9b9"></div>
<svg class="a" style="left:1069.5px;top:147.5px" width="6" height="4" viewBox="0 0 6 4"><path d="M0 4 H6 L3 .5 Z" fill="#222"/></svg>
<div class="a" style="left:1067.5px;top:526.5px;width:10.5px;height:11.5px;background:#fff;border:1px solid #b9b9b9"></div>
<div class="a" style="left:1067.5px;top:538.5px;width:10.5px;height:9.5px;background:#fff;border:1px solid #b9b9b9"></div>
<svg class="a" style="left:1069.5px;top:542px" width="6" height="4" viewBox="0 0 6 4"><path d="M0 0 H6 L3 3.5 Z" fill="#222"/></svg>
<div id="status">
<div class="t" style="left:8px;top:3px;font-size:8.5px;line-height:12px;color:#555">就绪</div>
<svg class="a" style="left:38px;top:3px" width="11" height="11" viewBox="0 0 11 11"><path d="M9 5.5 A3.8 3.8 0 1 1 5.5 1.7" stroke="#555" stroke-width=".9" fill="none"/><path d="M3.5 5.5 L5 7 L8 3.5" stroke="#555" stroke-width=".9" fill="none"/></svg>
<div class="t" style="left:51px;top:3px;font-size:8.5px;line-height:12px;color:#444;letter-spacing:-0.35px">辅助功能: 一切就绪</div>
<svg class="a" style="left:875px;top:3px" width="10" height="10" viewBox="0 0 10 10"><path d="M.5 .5 H9.5 V9.5 H.5 Z M.5 3.5 H9.5 M.5 6.5 H9.5 M3.5 .5 V9.5 M6.5 .5 V9.5" stroke="#777" stroke-width=".8" fill="none"/></svg>
<svg class="a" style="left:903px;top:3px" width="10" height="10" viewBox="0 0 10 10"><path d="M.5 .5 H9.5 V9.5 H.5 Z M2.5 2.5 H7.5 V7.5 H2.5 Z" stroke="#777" stroke-width=".8" fill="none"/></svg>
<svg class="a" style="left:931px;top:3px" width="10" height="10" viewBox="0 0 10 10"><path d="M.5 9.5 V.5 H9.5 V9.5 M3.5 .5 V6 H6.5 V.5" stroke="#777" stroke-width=".8" fill="none"/></svg>
<div class="t" style="left:955px;top:1px;font-size:9px;line-height:12px;color:#c8c8c8">−</div>
<div class="a" style="left:963px;top:8px;width:70px;height:1px;background:#9a9a9a"></div>
<div class="a" style="left:997.5px;top:5px;width:1px;height:6px;background:#777"></div>
<div class="t" style="left:1036px;top:1px;font-size:9px;line-height:12px;color:#c8c8c8">+</div>
<div class="t" style="left:1050px;top:2px;font-size:8.5px;line-height:12px;color:#d0d0d0">100%</div>
</div>
<div id="taskbar">
<svg class="a" style="left:10px;top:8px" width="13" height="13" viewBox="0 0 13 13"><path d="M0 1.8 L5.6 1 V6.1 H0 Z M6.4 .9 L13 0 V6.1 H6.4 Z M0 6.9 H5.6 V12 L0 11.2 Z M6.4 6.9 H13 V13 L6.4 12.1 Z" fill="#fff"/></svg>
<div class="a" style="left:34px;top:0;width:202px;height:28px;background:#f0f0f0"></div>
<svg class="a" style="left:41px;top:8px" width="13" height="13" viewBox="0 0 13 13"><circle cx="7.8" cy="5.2" r="4" stroke="#222" stroke-width="1.2" fill="none"/><path d="M5 8 L1 12" stroke="#222" stroke-width="1.3"/></svg>
<div class="t" style="left:62px;top:7px;font-size:11px;line-height:14px;color:#333">搜索</div>
<svg class="a" style="left:190px;top:1px" width="44" height="27" viewBox="0 0 44 27"><ellipse cx="14" cy="9" rx="8.5" ry="7" fill="#e6eef0" stroke="#5fb3b8" stroke-width="1.5" transform="rotate(30 14 9)"/><path d="M20 14 L27 19" stroke="#5fb3b8" stroke-width="1.5"/><path d="M27 19 L38 24.5" stroke="#5a3a8a" stroke-width="3" stroke-linecap="round"/><circle cx="12" cy="17.5" r="8.3" fill="#b8d428"/><path d="M5 14 Q11 18 8 25" stroke="#e8f29a" stroke-width="1" fill="none"/></svg>
<div class="a" style="left:273px;top:0;width:35px;height:28px;background:#966232"></div>
<div class="a" style="left:273px;top:26px;width:35px;height:2px;background:#f08a24"></div>
<div class="a" style="left:343px;top:0;width:34px;height:28px;background:#465255"></div>
<div class="a" style="left:309px;top:26px;width:33px;height:2px;background:#8cb6e6"></div>
<div class="a" style="left:344px;top:26px;width:33px;height:2px;background:#8cb6e6"></div>
<svg class="a" style="left:246px;top:5px" width="18" height="18" viewBox="0 0 18 18"><circle cx="9" cy="9.5" r="7.8" fill="#ff7139"/><circle cx="9.5" cy="10" r="5" fill="#7a3ec8"/><path d="M2 5 Q6 0 12 1.5 Q16 3 17 8 Q14 4 10 5 Q7 5 6 8 Q3 7 2 5 Z" fill="#ffb52a"/></svg>
<svg class="a" style="left:280px;top:6px" width="22" height="17" viewBox="0 0 22 17"><path d="M9 1.5 C4 1.5 1 4.5 1 8 C1 10 2 11.5 3.5 12.5 L3 15 L6 13.5 C7 14 8 14 9 14" stroke="#5aa6e8" stroke-width="1.8" fill="none"/><path d="M9 1.5 C14 1.5 17 4.5 17 8" stroke="#5aa6e8" stroke-width="1.8" fill="none"/><circle cx="15" cy="11" r="1.6" fill="#f5c400"/><circle cx="18" cy="13" r="1.6" fill="#e8483a"/><circle cx="15" cy="15" r="1.6" fill="#2bb24c"/><circle cx="12" cy="13" r="1.6" fill="#3b82f6"/></svg>
<div class="a" style="left:316px;top:6px;width:18px;height:17px;border-radius:3px;background:#f4f4f4"></div>
<div class="t" style="left:316px;width:18px;text-align:center;top:6px;font-family:'Liberation Serif',serif;font-weight:bold;font-size:14px;line-height:17px;color:#222">T</div>
<svg class="a" style="left:351px;top:6px" width="18" height="17" viewBox="0 0 18 17"><rect x="4" y="1" width="13" height="15" rx="1" fill="#21a366"/><rect x="4" y="1" width="13" height="5" fill="#33c481"/><rect x="4" y="11" width="13" height="5" fill="#107c41"/><rect x="0" y="4" width="9" height="9" rx="1" fill="#185c37"/><path d="M2.5 6 L6.5 11 M6.5 6 L2.5 11" stroke="#fff" stroke-width="1.2"/></svg>
<svg class="a" style="left:788px;top:5px" width="20" height="17" viewBox="0 0 20 17"><ellipse cx="10" cy="12" rx="9" ry="4.5" fill="#c9dcf5"/><circle cx="8" cy="9" r="5" fill="#dfeafa"/><circle cx="13" cy="10" r="4" fill="#b8d0f0"/><circle cx="15" cy="4" r="3.6" fill="#d9342b"/><text x="13.6" y="6" font-size="5" fill="#fff" font-family="Liberation Sans">1</text></svg>
<div class="t" style="left:810px;top:6px;font-size:10.5px;line-height:14px;color:#f0f0f0">29°C&nbsp; 多云</div>
<svg class="a" style="left:877px;top:11px" width="10" height="6" viewBox="0 0 10 6"><path d="M.8 5.2 L5 1 L9.2 5.2" stroke="#e8e8e8" stroke-width="1" fill="none"/></svg>
<svg class="a" style="left:894px;top:7px" width="9" height="14" viewBox="0 0 9 14"><rect x="0" y="0" width="9" height="14" rx="4.5" fill="#2a7de1"/><path d="M2.5 4 L6.5 9.5 L4.5 11.5 V2.5 L6.5 4.5 L2.5 10" stroke="#fff" stroke-width=".8" fill="none"/></svg>
<svg class="a" style="left:912px;top:9px" width="70" height="14" viewBox="0 0 70 14"><g fill="none" stroke="#d8d8d8" stroke-width="1"><path d="M6 2 V13 M3 6 L6 9 L9 6"/><path d="M44 12 A9 9 0 0 1 58 4 M47 12 A6 6 0 0 1 56 7 M50 12 A3 3 0 0 1 54 10"/></g><g fill="#e0e0e0"><ellipse cx="24" cy="10" rx="7" ry="3"/><circle cx="22" cy="8" r="3"/><rect x="32" y="7" width="9" height="5" rx="1"/></g><circle cx="53" cy="12" r="1.2" fill="#ddd"/></svg>
<div class="t" style="left:1018px;top:2px;font-size:7.5px;line-height:10px;color:#ddd">12:31</div>
<div class="t" style="left:983px;top:7px;font-size:11px;line-height:14px;color:#ddd">中</div>
<div class="t" style="left:907px;top:-1px;font-size:18.5px;line-height:24px;color:rgba(215,215,215,.85);letter-spacing:.6px;-webkit-text-stroke:0.5px rgba(33,44,49,.9)">CSDN @Frank牛蛙</div>
<div class="t" style="left:998px;top:15px;font-size:9px;line-height:11px;color:#f0f0f0">2024/7/5</div>
<svg class="a" style="left:1048px;top:6px" width="16" height="17" viewBox="0 0 16 17"><path d="M1 1 H15 V11 H6 L3 14 V11 H1 Z" stroke="#eee" stroke-width="1" fill="none"/><circle cx="11" cy="12.5" r="4" fill="#1f2a30" stroke="#eee" stroke-width=".8"/><text x="9.3" y="14.8" font-size="6" fill="#fff" font-family="Liberation Sans">2</text></svg>
</div>
<div id="dlg"></div>
<div class="a" style="left:23px;top:19px;width:561px;height:58.5px;background:#fff;border-bottom:1px solid #cfcfcf"></div>
<!-- title icon -->
<svg class="a" style="left:28px;top:23px" width="12" height="11" viewBox="0 0 12 11"><path d="M1 7.5 Q3 2.5 8.5 1" stroke="#8d929c" stroke-width="1.2" fill="none"/><path d="M4.8 3 L10 9.3" stroke="#3d62c8" stroke-width="1.3" fill="none"/></svg>
<div class="t" style="left:42px;top:23px;font-size:9px;line-height:12px;color:#222;letter-spacing:-0.4px">离群值</div>
<div class="t" style="left:497px;top:22px;font-size:9px;line-height:12px;color:#c8c8c8">—</div>
<div class="a" style="left:530.5px;top:24.5px;width:7px;height:7px;border:1px solid #222"></div>
<svg class="a" style="left:563px;top:24px" width="9" height="9" viewBox="0 0 9 9"><path d="M0.5 0.5 L8.5 8.5 M8.5 0.5 L0.5 8.5" stroke="#222" stroke-width="1"/></svg>
<div class="t" style="left:31px;top:42px;font-size:9px;line-height:12px;color:#000;font-weight:bold">指定阈值</div>
<div class="t" style="left:47px;top:53px;font-size:9px;letter-spacing:-0.5px;line-height:12px;color:#222">设置值的最小计数。</div>
<!-- header art -->
<svg class="a" style="left:548px;top:38px" width="36" height="39" viewBox="0 0 36 39">
<defs><linearGradient id="hg" x1="0" y1="0" x2="1" y2="0"><stop offset="0" stop-color="#fff"/><stop offset=".35" stop-color="#f3f5fa"/><stop offset="1" stop-color="#e2e8f2"/></linearGradient></defs>
<rect x="0" y="0" width="36" height="39" fill="url(#hg)"/>
<g stroke="#d5dbe3" stroke-width="1" fill="none"><path d="M3 16 L33 8"/><path d="M8 14 V26 M16 12 V24 M24 10 V22"/></g>
<path d="M3 12.1 L32.3 2.7" stroke="#5fae7e" stroke-width="1.4"/>
<path d="M8 1.5 V10.5 M16.3 1.5 V8 M24.5 1.5 V5.5 M31.5 1.5 V3.5" stroke="#6fbb8c" stroke-width="1.1"/>
<path d="M10.5 7 Q14.5 -0.5 18.5 4 Q21.5 8 23 16.5" stroke="#dca521" stroke-width="3.2" fill="none" stroke-linecap="round"/>
<path d="M18.3 16.3 L27 15.6 L24 23.3 Z" fill="#dca521"/>
<path d="M20 25.3 L27 24.5 L28.6 26 V35 L21.5 36 L20 35 Z" fill="#e0231a"/>
<path d="M26 25.3 L28.6 26 V35 L26 35.6 Z" fill="#9c1410"/>
<path d="M20.5 37 H27.5 V39 H20.5 Z" fill="#f3c6c2" opacity=".7"/>
</svg>
<!-- min value -->
<div class="t" style="left:34px;top:84px;font-size:9px;line-height:12px;color:#222">最小值(M):</div>
<div class="a" style="left:113px;top:83px;width:79px;height:15px;background:#fff;border:1px solid #bdbdbd"></div>
<div class="t" style="left:114.5px;top:83.5px;font-size:9px;line-height:12px;color:#333;letter-spacing:0.6px">10</div>
<div class="a" style="left:114.3px;top:85.5px;width:0.9px;height:7.5px;background:#444"></div>
<div class="a" style="left:182px;top:84px;width:9px;height:13px;background:#f4f4f4;border-left:1px solid #d0d0d0"></div>
<svg class="a" style="left:183px;top:85px" width="8" height="11" viewBox="0 0 8 11"><path d="M1.5 4 L4 1.5 L6.5 4 Z M1.5 7 L4 9.5 L6.5 7 Z" fill="#222"/><path d="M1 5.5 H7" stroke="#ccc" stroke-width=".8"/></svg>
<!-- slider -->
<div class="a" style="left:36px;top:103.5px;width:531px;height:3px;background:#dcdcdc"></div>
<svg class="a" style="left:559px;top:98px" width="9" height="15" viewBox="0 0 9 15"><path d="M0.5 0.7 H8 V10 L4.3 14 L0.5 10 Z" fill="#2f73d8"/></svg>
<div class="a" style="left:40px;top:113px;width:1px;height:2px;background:#a8a8a8"></div>
<div class="a" style="left:105.35px;top:113px;width:1px;height:2px;background:#a8a8a8"></div>
<div class="a" style="left:170.7px;top:113px;width:1px;height:2px;background:#a8a8a8"></div>
<div class="a" style="left:236.05px;top:113px;width:1px;height:2px;background:#a8a8a8"></div>
<div class="a" style="left:301.4px;top:113px;width:1px;height:2px;background:#a8a8a8"></div>
<div class="a" style="left:366.75px;top:113px;width:1px;height:2px;background:#a8a8a8"></div>
<div class="a" style="left:432.1px;top:113px;width:1px;height:2px;background:#a8a8a8"></div>
<div class="a" style="left:497.45px;top:113px;width:1px;height:2px;background:#a8a8a8"></div>
<div class="a" style="left:562.8px;top:113px;width:1px;height:2px;background:#a8a8a8"></div>
<!-- chart -->
<div class="a" style="left:35px;top:121px;width:533px;height:278px;background:#fff;border-top:1px solid #a6a6a6;border-left:1px solid #6c6c6c"></div>
<svg class="a" style="left:440px;top:132px" width="127.5" height="253.4" viewBox="0 0 127.5 253.4"><path d="M-261.64 253.4 L-8.24 0 M-257.42 253.4 L-4.02 0 M-253.2 253.4 L0.2 0 M-248.98 253.4 L4.42 0 M-244.76 253.4 L8.64 0 M-240.54 253.4 L12.86 0 M-236.32 253.4 L17.08 0 M-232.1 253.4 L21.3 0 M-227.88 253.4 L25.52 0 M-223.66 253.4 L29.74 0 M-219.44 253.4 L33.96 0 M-215.22 253.4 L38.18 0 M-211 253.4 L42.4 0 M-206.78 253.4 L46.62 0 M-202.56 253.4 L50.84 0 M-198.34 253.4 L55.06 0 M-194.12 253.4 L59.28 0 M-189.9 253.4 L63.5 0 M-185.68 253.4 L67.72 0 M-181.46 253.4 L71.94 0 M-177.24 253.4 L76.16 0 M-173.02 253.4 L80.38 0 M-168.8 253.4 L84.6 0 M-164.58 253.4 L88.82 0 M-160.36 253.4 L93.04 0 M-156.14 253.4 L97.26 0 M-151.92 253.4 L101.48 0 M-147.7 253.4 L105.7 0 M-143.48 253.4 L109.92 0 M-139.26 253.4 L114.14 0 M-135.04 253.4 L118.36 0 M-130.82 253.4 L122.58 0 M-126.6 253.4 L126.8 0 M-122.38 253.4 L131.02 0 M-118.16 253.4 L135.24 0 M-113.94 253.4 L139.46 0 M-109.72 253.4 L143.68 0 M-105.5 253.4 L147.9 0 M-101.28 253.4 L152.12 0 M-97.06 253.4 L156.34 0 M-92.84 253.4 L160.56 0 M-88.62 253.4 L164.78 0 M-84.4 253.4 L169 0 M-80.18 253.4 L173.22 0 M-75.96 253.4 L177.44 0 M-71.74 253.4 L181.66 0 M-67.52 253.4 L185.88 0 M-63.3 253.4 L190.1 0 M-59.08 253.4 L194.32 0 M-54.86 253.4 L198.54 0 M-50.64 253.4 L202.76 0 M-46.42 253.4 L206.98 0 M-42.2 253.4 L211.2 0 M-37.98 253.4 L215.42 0 M-33.76 253.4 L219.64 0 M-29.54 253.4 L223.86 0 M-25.32 253.4 L228.08 0 M-21.1 253.4 L232.3 0 M-16.88 253.4 L236.52 0 M-12.66 253.4 L240.74 0 M-8.44 253.4 L244.96 0 M-4.22 253.4 L249.18 0 M0 253.4 L253.4 0 M4.22 253.4 L257.62 0 M8.44 253.4 L261.84 0 M12.66 253.4 L266.06 0 M16.88 253.4 L270.28 0 M21.1 253.4 L274.5 0 M25.32 253.4 L278.72 0 M29.54 253.4 L282.94 0 M33.76 253.4 L287.16 0 M37.98 253.4 L291.38 0 M42.2 253.4 L295.6 0 M46.42 253.4 L299.82 0 M50.64 253.4 L304.04 0 M54.86 253.4 L308.26 0 M59.08 253.4 L312.48 0 M63.3 253.4 L316.7 0 M67.52 253.4 L320.92 0 M71.74 253.4 L325.14 0 M75.96 253.4 L329.36 0 M80.18 253.4 L333.58 0 M84.4 253.4 L337.8 0 M88.62 253.4 L342.02 0 M92.84 253.4 L346.24 0 M97.06 253.4 L350.46 0 M101.28 253.4 L354.68 0 M105.5 253.4 L358.9 0 M109.72 253.4 L363.12 0 M113.94 253.4 L367.34 0 M118.16 253.4 L371.56 0 M122.38 253.4 L375.78 0 M126.6 253.4 L380 0" stroke="#c9c9c9" stroke-width="0.75" fill="none"/><path d="M0.5 0 V253.4" stroke="#a8a8a8" stroke-width="1" stroke-dasharray="2 1.5"/><path d="M127.0 0 V253.4" stroke="#d4d4d4" stroke-width="1"/></svg>
<div class="a" style="left:59.3px;top:131.5px;width:380.7px;height:1px;background:#b4b4b4"></div>
<div class="a" style="left:440px;top:131.5px;width:120.5px;height:1px;background:#c6c6c6;z-index:1"></div>
<div class="a" style="left:56.5px;top:131.5px;width:3px;height:1px;background:#a0a0a0"></div>
<div class="t" style="left:20px;width:36px;text-align:right;top:128px;font-size:7px;line-height:10px;color:#333">3880</div>
<div class="a" style="left:59.3px;top:182.18px;width:380.7px;height:1px;background:#b4b4b4"></div>
<div class="a" style="left:440px;top:182.18px;width:120.5px;height:1px;background:#c6c6c6;z-index:1"></div>
<div class="a" style="left:56.5px;top:182.18px;width:3px;height:1px;background:#a0a0a0"></div>
<div class="t" style="left:20px;width:36px;text-align:right;top:178.68px;font-size:7px;line-height:10px;color:#333">3104</div>
<div class="a" style="left:59.3px;top:232.86px;width:380.7px;height:1px;background:#b4b4b4"></div>
<div class="a" style="left:440px;top:232.86px;width:120.5px;height:1px;background:#c6c6c6;z-index:1"></div>
<div class="a" style="left:56.5px;top:232.86px;width:3px;height:1px;background:#a0a0a0"></div>
<div class="t" style="left:20px;width:36px;text-align:right;top:229.36px;font-size:7px;line-height:10px;color:#333">2328</div>
<div class="a" style="left:59.3px;top:283.54px;width:380.7px;height:1px;background:#b4b4b4"></div>
<div class="a" style="left:440px;top:283.54px;width:120.5px;height:1px;background:#c6c6c6;z-index:1"></div>
<div class="a" style="left:56.5px;top:283.54px;width:3px;height:1px;background:#a0a0a0"></div>
<div class="t" style="left:20px;width:36px;text-align:right;top:280.04px;font-size:7px;line-height:10px;color:#333">1552</div>
<div class="a" style="left:59.3px;top:334.22px;width:380.7px;height:1px;background:#b4b4b4"></div>
<div class="a" style="left:440px;top:334.22px;width:120.5px;height:1px;background:#c6c6c6;z-index:1"></div>
<div class="a" style="left:56.5px;top:334.22px;width:3px;height:1px;background:#a0a0a0"></div>
<div class="t" style="left:20px;width:36px;text-align:right;top:330.72px;font-size:7px;line-height:10px;color:#333">776</div>
<div class="a" style="left:59.3px;top:384.9px;width:380.7px;height:1px;background:#b4b4b4"></div>
<div class="a" style="left:440px;top:384.9px;width:120.5px;height:1px;background:#c6c6c6;z-index:1"></div>
<div class="a" style="left:56.5px;top:384.9px;width:3px;height:1px;background:#a0a0a0"></div>
<div class="t" style="left:20px;width:36px;text-align:right;top:381.4px;font-size:7px;line-height:10px;color:#333">0</div>
<div class="a" style="left:58.8px;top:132px;width:1px;height:256.4px;background:#bfbfbf"></div>
<div class="a" style="left:59.3px;top:384.9px;width:508.2px;height:1px;background:#a8a8a8"></div>
<div class="a" style="left:185.8px;top:385.4px;width:1px;height:3px;background:#a8a8a8"></div>
<div class="a" style="left:312.8px;top:385.4px;width:1px;height:3px;background:#a8a8a8"></div>
<div class="a" style="left:439.8px;top:385.4px;width:1px;height:3px;background:#a8a8a8"></div>
<div class="a" style="left:566.5px;top:385.4px;width:1px;height:3px;background:#a8a8a8"></div>
<div class="a" style="left:91px;top:132px;width:63px;height:253.4px;background:#577dbb"></div>
<div class="a" style="left:218px;top:269px;width:63px;height:116.4px;background:#577dbb"></div>
<div class="a" style="left:345px;top:367px;width:62.5px;height:18.4px;background:#577dbb"></div>
<div class="a" style="left:472px;top:384px;width:63px;height:1.2px;background:#a9bde0"></div>
<div class="t" style="left:102px;width:40px;text-align:center;top:387px;font-size:8px;line-height:10px;color:#222">未婚</div>
<div class="t" style="left:229px;width:40px;text-align:center;top:387px;font-size:8px;line-height:10px;color:#222">已婚</div>
<div class="t" style="left:356px;width:40px;text-align:center;top:387px;font-size:8px;line-height:10px;color:#222">离异</div>
<div class="t" style="left:483px;width:40px;text-align:center;top:387px;font-size:8px;line-height:10px;color:#222">丧偶</div>
<!-- toolbar -->
<div class="a" style="left:35px;top:406px;width:17px;height:14.6px;background:#cfe3f8;border:1px solid #7f9fcc;border-radius:1.5px"></div>
<svg class="a" style="left:39px;top:410px" width="10" height="8" viewBox="0 0 10 8"><rect x="0.5" y="0.5" width="8.6" height="6.4" fill="#fff" stroke="#a0a0a0" stroke-width=".6"/><rect x="1.5" y="1.5" width="1.5" height="5" fill="#7a7aff"/><rect x="4" y="3.5" width="1.2" height="3" fill="#3a3aff"/><rect x="6.4" y="4.5" width="1.2" height="2" fill="#2020ff"/></svg>
<div class="a" style="left:53px;top:406px;width:17px;height:14.6px;background:#cdcdcd;border-radius:1.5px"></div>
<svg class="a" style="left:57px;top:410px" width="10" height="8" viewBox="0 0 10 8"><rect x="0.5" y="0.5" width="8.6" height="6.4" fill="#e8e8e8" stroke="#bbb" stroke-width=".6"/><path d="M1.5 5 Q4.8 1 8 5" stroke="#555" stroke-width=".7" fill="none"/></svg>
<!-- separator -->
<div class="a" style="left:23px;top:427.5px;width:561px;height:1px;background:#d4d4d4"></div>
<div class="a" style="left:23px;top:428.5px;width:561px;height:1px;background:#fafafa"></div>
<!-- buttons -->
<div class="a btn" style="left:386px;top:431px;width:58.5px;height:15.5px">&lt; 上一步(B)</div>
<div class="a btn" style="left:450px;top:431px;width:58.5px;height:15.5px;border-color:#2c7ad6;box-shadow:inset 0 0 0 .5px #2c7ad6">下一步(N) &gt;</div>
<div class="a btn" style="left:514.5px;top:431px;width:55px;height:15.5px">取消</div>
</body></html>
